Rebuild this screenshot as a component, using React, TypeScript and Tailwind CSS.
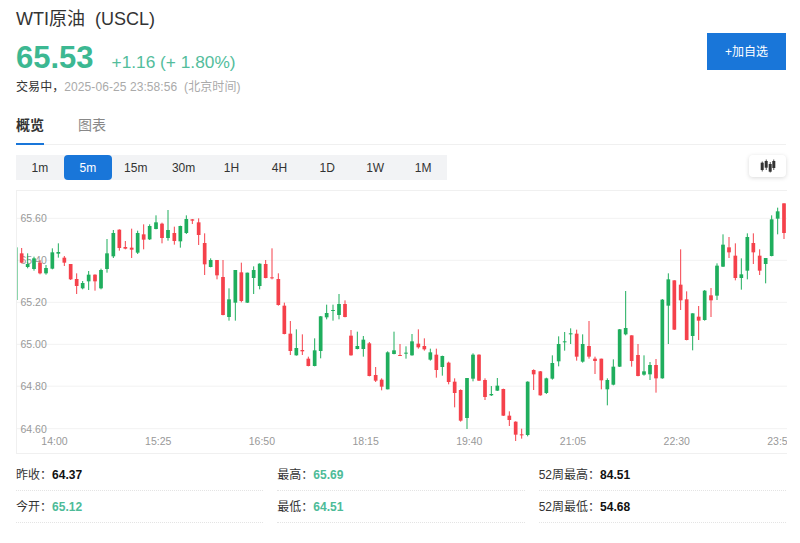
const FONT = "font-['Liberation_Sans','Noto_Sans_CJK_SC',sans-serif]";

type C = [number, 0 | 1, number, number, number, number];
// 0 = green, 1 = red; x, colour, wick top, body top, body bottom, wick bottom (in 3x units of each section)
const s1: C[] = [
  [47, 0, 172, 172, 330, 330], [65, 1, 174, 190, 218, 220], [83, 0, 190, 222, 231, 235], [102, 0, 200, 205, 237, 242],
  [120, 1, 210, 218, 250, 253], [138, 0, 225, 234, 250, 254], [157, 0, 175, 187, 236, 238], [175, 0, 160, 186, 191, 203],
  [193, 1, 198, 203, 218, 228], [212, 1, 222, 222, 268, 270], [230, 1, 250, 267, 288, 312], [248, 0, 273, 279, 295, 298],
  [266, 0, 243, 254, 274, 300], [285, 1, 253, 254, 274, 302], [303, 0, 236, 240, 295, 298], [321, 0, 147, 190, 237, 248],
  [340, 0, 120, 129, 199, 204], [358, 1, 118, 119, 174, 182], [376, 1, 153, 171, 176, 178], [395, 1, 116, 173, 179, 204],
  [413, 0, 122, 129, 188, 192], [431, 1, 103, 133, 149, 178], [449, 0, 103, 108, 148, 150], [468, 0, 76, 97, 117, 118],
  [486, 1, 98, 101, 144, 160], [504, 0, 60, 120, 144, 152], [523, 1, 110, 129, 153, 164], [541, 0, 107, 108, 154, 173],
  [559, 0, 76, 87, 129, 132], [577, 1, 87, 88, 92, 102], [596, 1, 85, 97, 135, 165], [614, 1, 130, 159, 223, 255],
  [632, 0, 205, 210, 231, 232], [651, 1, 210, 210, 256, 268], [669, 1, 210, 261, 375, 376], [687, 0, 295, 328, 381, 392],
  [706, 0, 240, 240, 338, 392], [724, 1, 218, 247, 333, 337], [742, 0, 248, 248, 338, 339], [761, 0, 229, 240, 264, 312],
  [779, 0, 220, 221, 288, 298], [797, 1, 210, 222, 264, 265],
];
const s2: C[] = [
  [21, 1, 175, 262, 265, 268], [40, 1, 250, 267, 345, 347], [58, 1, 338, 347, 432, 433], [76, 1, 393, 431, 483, 495],
  [94, 0, 418, 474, 496, 497], [112, 1, 433, 480, 484, 495], [130, 1, 500, 506, 528, 529], [149, 0, 445, 481, 528, 529],
  [167, 0, 378, 379, 483, 505], [185, 0, 344, 369, 382, 388], [204, 0, 344, 360, 362, 392], [222, 0, 312, 342, 375, 388],
  [240, 1, 331, 342, 381, 382], [258, 1, 420, 437, 496, 497], [277, 0, 425, 468, 477, 478], [295, 0, 438, 449, 477, 500],
  [313, 1, 456, 460, 558, 559], [332, 1, 531, 555, 572, 576], [350, 1, 565, 569, 590, 601], [368, 0, 484, 487, 598, 598],
  [387, 0, 425, 481, 492, 493], [405, 1, 462, 495, 497, 498], [423, 0, 469, 488, 491, 506], [441, 0, 432, 454, 496, 497],
  [460, 1, 418, 461, 472, 476], [478, 1, 445, 468, 478, 482], [496, 0, 476, 487, 509, 512], [514, 1, 476, 494, 540, 563],
  [532, 0, 497, 498, 531, 557], [551, 1, 515, 518, 576, 583], [569, 1, 565, 575, 609, 652], [587, 1, 598, 600, 692, 695],
  [606, 0, 564, 564, 684, 717], [624, 0, 490, 494, 566, 574], [642, 1, 493, 494, 572, 573], [660, 1, 565, 570, 621, 630],
  [679, 0, 588, 612, 616, 618], [697, 0, 564, 587, 602, 603], [715, 1, 596, 597, 677, 678], [733, 1, 664, 677, 690, 708],
  [752, 1, 694, 695, 734, 753], [770, 1, 716, 733, 735, 746], [788, 0, 574, 575, 735, 739], [806, 1, 538, 540, 553, 600],
];
const s3: C[] = [
  [31, 1, 543, 544, 616, 617], [49, 0, 563, 565, 609, 612], [67, 0, 496, 519, 566, 569], [86, 0, 439, 462, 514, 529],
  [104, 0, 426, 454, 456, 482], [122, 0, 415, 430, 433, 462], [140, 1, 419, 431, 500, 512], [158, 0, 433, 462, 515, 518],
  [177, 1, 393, 468, 500, 506], [195, 1, 500, 506, 513, 552], [214, 1, 506, 506, 571, 598], [232, 0, 565, 570, 598, 646],
  [250, 0, 508, 530, 584, 586], [269, 0, 417, 418, 530, 531], [287, 0, 303, 414, 433, 436], [305, 1, 436, 436, 513, 530],
  [324, 1, 462, 495, 558, 559], [342, 0, 496, 544, 554, 557], [360, 0, 516, 525, 553, 570], [378, 1, 507, 525, 565, 608],
  [397, 0, 327, 329, 565, 566], [415, 0, 250, 268, 347, 462], [433, 1, 271, 271, 419, 420], [452, 1, 178, 284, 331, 360],
  [470, 1, 304, 328, 450, 451], [488, 0, 370, 370, 438, 481], [506, 1, 348, 380, 392, 450], [524, 0, 300, 302, 390, 392],
  [543, 1, 294, 316, 331, 381], [561, 0, 220, 227, 317, 330], [579, 0, 133, 164, 230, 231], [597, 1, 141, 172, 187, 204],
  [616, 1, 160, 197, 264, 271], [634, 0, 205, 253, 264, 299], [652, 0, 130, 141, 242, 268], [670, 1, 130, 159, 187, 222],
  [689, 1, 178, 197, 242, 255], [707, 0, 204, 204, 222, 280], [725, 0, 76, 88, 198, 199], [743, 0, 53, 64, 86, 133],
  [762, 1, 40, 40, 129, 147],
];
const candles = [
  ...s1.map((c) => ({ c, off: 0 })),
  ...s2.map((c) => ({ c, off: 265 })),
  ...s3.map((c) => ({ c, off: 530 })),
];

const grid: [string, number][] = [
  ["65.60", 218.3], ["65.40", 260.3], ["65.20", 302.3], ["65.00", 344.3], ["64.80", 386.2], ["64.60", 428.7],
];
const times = ["14:00", "15:25", "16:50", "18:15", "19:40", "21:05", "22:30", "23:55"];
const frames = ["1m", "5m", "15m", "30m", "1H", "4H", "1D", "1W", "1M"];

function Chart() {
  return (
    <svg viewBox="17 191 770 262" width="770" height="262" className="block">
      {grid.map(([l, y]) => (
        <line key={l} x1="17" x2="787" y1={y} y2={y} stroke="#f2f2f2" strokeWidth="1" />
      ))}
      {grid.map(([l, y]) => (
        <text key={l} x="20.5" y={y + 3.8} fontSize="10.5" fill="#999999">{l}</text>
      ))}
      {times.map((t, i) => (
        <text key={t} x={54.5 + 103.7 * i} y="444.5" fontSize="10.5" fill="#999999" textAnchor="middle">{t}</text>
      ))}
      {candles.map(({ c, off }, i) => {
        const x = off + c[0] / 3;
        const col = c[1] ? "#f5414b" : "#1fae5d";
        const y = (v: number) => 190 + v / 3;
        return (
          <g key={i}>
            <line x1={x} x2={x} y1={y(c[2])} y2={y(c[5])} stroke={col} strokeWidth="1" />
            <rect x={x - 1.85} width="3.7" y={y(c[3])} height={Math.max(1, (c[4] - c[3]) / 3)} fill={col} />
          </g>
        );
      })}
    </svg>
  );
}

function Stat({ label, value, green }: { label: string; value: string; green?: boolean }) {
  return (
    <div className="h-8 border-b border-dotted border-[#e4e4e4] flex items-center text-xs text-[#333333]">
      <span>{label}：</span>
      <span className={green ? "font-bold text-[#4dbb98]" : "font-bold text-[#111111]"}>{value}</span>
    </div>
  );
}

export default function App() {
  return (
    <div className={`${FONT} w-[800px] h-[543px] overflow-hidden bg-white pt-2 px-4 box-border`}>
      <div className="w-[770px] flex justify-between items-start">
        <div>
          <div className="text-lg leading-[22px] text-[#333333] whitespace-pre">WTI原油  (USCL)</div>
          <div className="flex items-baseline mt-2 h-[40px]">
            <span className="text-[31px] leading-[40px] font-bold text-[#3cb892]">65.53</span>
            <span className="text-[17.3px] ml-[18px] text-[#53bd9c]">+1.16 (+ 1.80%)</span>
          </div>
          <div className="text-xs leading-4 mt-[1px] whitespace-pre tracking-[0.08px] text-[#aaaaaa]">
            <span className="text-[#333333]">交易中，</span>2025-06-25 23:58:56  (北京时间)
          </div>
        </div>
        <button className="mt-[25px] w-[79px] h-[37px] bg-[#1976d9] text-white text-xs">+加自选</button>
      </div>

      <div className="mt-[22px] h-[27px] w-[770px] flex border-b border-[#f0f0f0] text-sm box-content">
        <div className="w-[28px] h-[26px] font-bold text-[#333333] border-b-2 border-[#1976d9] leading-[17px] box-content">概览</div>
        <div className="ml-[34px] text-[#888888] leading-[17px]">图表</div>
      </div>

      <div className="mt-[10px] w-[770px] flex justify-between items-start">
        <div className="flex bg-[#f2f3f5] h-[25px] text-xs text-[#333333]">
          {frames.map((f) => (
            <div
              key={f}
              className={
                f === "5m"
                  ? "w-[47.9px] h-[25px] flex items-center justify-center rounded-sm bg-[#1976d9] text-white"
                  : "w-[47.9px] h-[25px] flex items-center justify-center"
              }
            >
              {f}
            </div>
          ))}
        </div>
        <div className="w-[37px] h-[22px] bg-white rounded-sm shadow-[0_1px_4px_rgba(0,0,0,0.15)] flex items-center justify-center">
          <svg width="16" height="14" viewBox="0 0 16 14" fill="#333333">
            <rect x="0.7" y="3.7" width="3" height="7.3" /><rect x="1.8" y="2.5" width="0.8" height="10" />
            <rect x="4.7" y="2" width="3" height="6.7" /><rect x="5.8" y="0.5" width="0.8" height="10.5" />
            <rect x="8.7" y="5" width="3" height="7.7" /><rect x="9.8" y="3" width="0.8" height="10.5" />
            <rect x="12.3" y="2" width="3" height="7" /><rect x="13.4" y="0.5" width="0.8" height="10.5" />
          </svg>
        </div>
      </div>

      <div className="mt-[10px] w-[771px] h-[264px] border border-r-0 border-[#f0f0f0] box-border">
        <Chart />
      </div>

      <div className="mt-[5px] w-[770px] grid grid-cols-3 gap-x-[14px]">
        <Stat label="昨收" value="64.37" />
        <Stat label="最高" value="65.69" green />
        <Stat label="52周最高" value="84.51" />
        <Stat label="今开" value="65.12" green />
        <Stat label="最低" value="64.51" green />
        <Stat label="52周最低" value="54.68" />
      </div>
    </div>
  );
}
